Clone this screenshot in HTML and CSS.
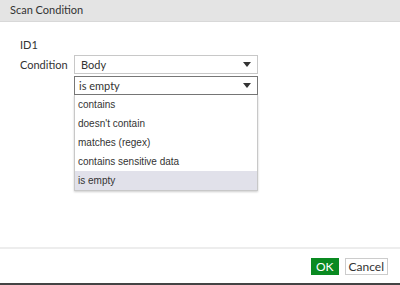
FILE: index.html
```html
<!DOCTYPE html>
<html lang="en">
<head>
<meta charset="UTF-8">
<title>Scan Condition</title>
<link rel="stylesheet" href="styles.css">
</head>
<body>
<div class="dialog">
  <div class="dialog-header">Scan Condition</div>

  <div class="dialog-body">
    <div class="row">
      <span class="label">ID1</span>
    </div>
    <div class="row">
      <span class="label">Condition</span>
      <div class="field">
        <div class="select">
          <span>Body</span>
          <span class="caret"></span>
        </div>
        <div class="select open">
          <span>is empty</span>
          <span class="caret"></span>
        </div>
        <ul class="options">
          <li>contains</li>
          <li>doesn't contain</li>
          <li>matches (regex)</li>
          <li>contains sensitive data</li>
          <li class="selected">is empty</li>
        </ul>
      </div>
    </div>
  </div>

  <div class="dialog-footer">
    <button class="btn btn-ok">OK</button>
    <button class="btn">Cancel</button>
  </div>
</div>
<div class="taskbar"></div>
</body>
</html>
```

FILE: styles.css
```css
body {
  margin: 0;
  width: 400px;
  height: 285px;
  font-family: Lato, "Liberation Sans", sans-serif;
  font-size: 11px;
  color: #333;
  background: #fff;
  display: flex;
  flex-direction: column;
  overflow: hidden;
}

.dialog {
  flex: 1;
  display: flex;
  flex-direction: column;
}

.dialog-header {
  height: 22px;
  line-height: 20px;
  padding-left: 10px;
  background: #e4e4e4;
  border-bottom: 1px solid #d8d8d8;
  box-sizing: border-box;
  color: #333;
}

.dialog-body {
  flex: 1;
  padding: 13px 0 0 20px;
}

.row {
  display: flex;
  align-items: flex-start;
}

.row .label {
  width: 54px;
  line-height: 19px;
}

.row + .row {
  margin-top: 1px;
}

.field {
  width: 184px;
  display: flex;
  flex-direction: column;
}

.select {
  height: 17px;
  border: 1px solid #c8c8c8;
  display: flex;
  align-items: center;
  justify-content: space-between;
  padding: 0 6px 0 6px;
  margin-bottom: 2px;
  line-height: 15px;
}

.select.open {
  border-color: #777;
  padding-left: 4px;
  margin-bottom: 0;
}

.caret {
  width: 0;
  height: 0;
  border-left: 4px solid transparent;
  border-right: 4px solid transparent;
  border-top: 5px solid #333;
}

.options {
  list-style: none;
  margin: 0;
  padding: 0;
  border: 1px solid #c8c8c8;
  border-top: none;
  box-shadow: 0 1px 2px rgba(0, 0, 0, 0.2);
  font-family: "Liberation Sans", Arial, sans-serif;
  font-size: 10px;
  color: #333;
}

.options li {
  height: 19px;
  line-height: 19px;
  padding-left: 3px;
}

.options .selected {
  background: #e1e1ea;
}

.dialog-footer {
  height: 34px;
  border-top: 2px solid #ededed;
  display: flex;
  justify-content: flex-end;
  align-items: center;
  gap: 6px;
  padding-right: 12px;
}

.btn {
  height: 17px;
  padding: 0 3px;
  font-family: Lato, "Liberation Sans", sans-serif;
  font-size: 12px;
  line-height: 15px;
  border: 1px solid #ccc;
  background: #fff;
  color: #333;
}

.btn-ok {
  background: #0a8a21;
  border-color: #0a8a21;
  color: #fff;
  padding: 0 4px;
}

.taskbar {
  height: 2px;
  background: #444;
}
```
